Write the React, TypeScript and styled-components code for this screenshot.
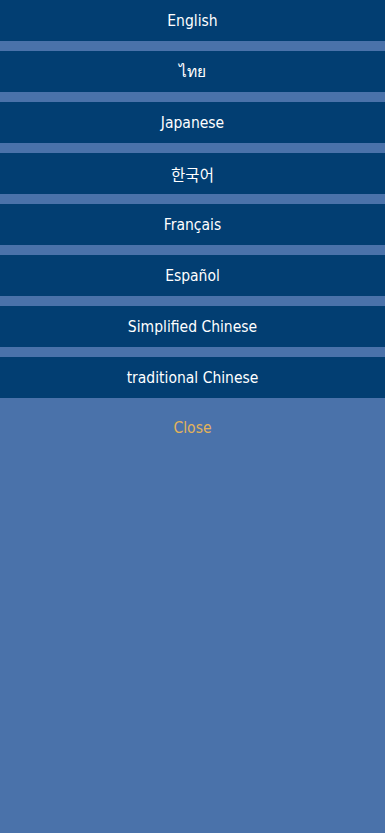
import React from "react";
import styled, { createGlobalStyle } from "styled-components";

const GlobalStyle = createGlobalStyle`
  html, body {
    margin: 0;
    padding: 0;
    background-color: #4a72aa;
  }
  body {
    font-family: "DejaVu Sans Condensed", "Noto Sans", "Noto Sans CJK KR", sans-serif;
  }
`;

const Page = styled.main`
  min-height: 833px;
  background-color: #4a72aa;
  display: flex;
  flex-direction: column;
`;

const List = styled.ul`
  list-style: none;
  margin: 0;
  padding: 0;
  display: flex;
  flex-direction: column;
  gap: 10px;
`;

const Item = styled.li`
  height: 41px;
  background-color: #023e72;
  color: #ffffff;
  display: flex;
  align-items: center;
  justify-content: center;
  font-size: 15.5px;
  cursor: pointer;
`;

const Close = styled.button`
  all: unset;
  align-self: center;
  margin-top: 21px;
  color: #e3b25a;
  font-family: "DejaVu Sans Condensed", "Noto Sans", sans-serif;
  font-size: 15.5px;
  cursor: pointer;
`;

const languages = [
  "English",
  "ไทย",
  "Japanese",
  "한국어",
  "Français",
  "Español",
  "Simplified Chinese",
  "traditional Chinese",
];

const App: React.FC = () => {
  return (
    <Page>
      <GlobalStyle />
      <List>
        {languages.map((lang) => (
          <Item key={lang}>{lang}</Item>
        ))}
      </List>
      <Close type="button">Close</Close>
    </Page>
  );
};

export default App;
